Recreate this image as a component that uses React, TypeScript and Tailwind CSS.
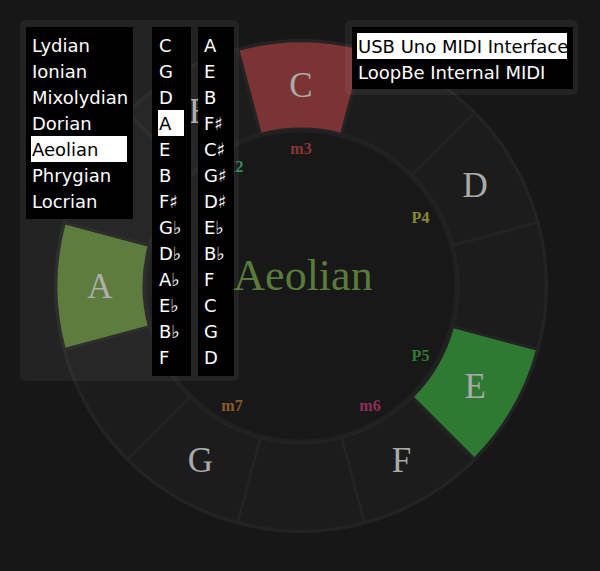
import React from "react";

const CX = 250;
const CY = 250;

const notes = ["C", "", "D", "", "E", "F", "", "G", "", "A", "", "B"];

// highlighted segments of the current mode (root A, aeolian)
const segFill: Record<number, string> = {
  0: "#7b3333",
  4: "#2f7a33",
  9: "#547534",
};

const intervals: {i: number; label: string; color: string}[] = [
  {i: 9, label: "P1", color: "#5a7b3a"},
  {i: 11, label: "M2", color: "#2e8b57"},
  {i: 0, label: "m3", color: "#8b3434"},
  {i: 2, label: "P4", color: "#8c8734"},
  {i: 4, label: "P5", color: "#2f7a33"},
  {i: 5, label: "m6", color: "#8b2f57"},
  {i: 7, label: "m7", color: "#8b5a2b"},
];

const modes = ["Lydian", "Ionian", "Mixolydian", "Dorian", "Aeolian", "Phrygian", "Locrian"];
const majors = ["C", "G", "D", "A", "E", "B", "F♯", "G♭", "D♭", "A♭", "E♭", "B♭", "F"];
const minors = ["A", "E", "B", "F♯", "C♯", "G♯", "D♯", "E♭", "B♭", "F", "C", "G", "D"];
const devices = ["USB Uno MIDI Interface", "LoopBe Internal MIDI"];

function pt(r: number, deg: number) {
  const a = (deg * Math.PI) / 180;
  return [CX + r * Math.sin(a), CY - r * Math.cos(a)];
}

function sector(a0: number, a1: number, r0: number, r1: number) {
  const [x1, y1] = pt(r1, a0);
  const [x2, y2] = pt(r1, a1);
  const [x3, y3] = pt(r0, a1);
  const [x4, y4] = pt(r0, a0);
  return `M${x1} ${y1} A${r1} ${r1} 0 0 1 ${x2} ${y2} L${x3} ${y3} A${r0} ${r0} 0 0 0 ${x4} ${y4} Z`;
}

function ListBox({items, selected, className}: {items: string[]; selected?: number; className: string}) {
  return (
    <div className={`bg-black ${className}`}>
      {items.map((item, idx) => (
        <div
          key={idx}
          className={`h-[26px] whitespace-nowrap pl-px pt-[2px] leading-[24px] ${
            idx === selected ? "bg-white text-black" : "text-white"
          }`}
        >
          {item}
        </div>
      ))}
    </div>
  );
}

function Wheel() {
  return (
    <svg width={500} height={500} viewBox="0 0 500 500" className="ml-[2px] block">
      <circle cx={CX} cy={CY} r={247} fill="#232323" />
      {notes.map((_, i) => (
        <path
          key={i}
          d={sector(i * 30 - 15, i * 30 + 15, 157, 245)}
          fill={segFill[i] ?? "#1c1c1c"}
          stroke="#232323"
          strokeWidth={3}
        />
      ))}
      <circle cx={CX} cy={CY} r={155} fill="#181818" stroke="#202020" strokeWidth={3} />
      {notes.map((n, i) => {
        if (!n) return null;
        const [x, y] = pt(201, i * 30);
        return (
          <text
            key={i}
            x={x}
            y={y}
            textAnchor="middle"
            dominantBaseline="central"
            fill="#aaaaaa"
            fontSize={35}
            fontFamily="'Liberation Serif', serif"
          >
            {n}
          </text>
        );
      })}
      {intervals.map((it) => {
        const [x, y] = pt(138, it.i * 30);
        return (
          <text
            key={it.label}
            x={x}
            y={y}
            textAnchor="middle"
            dominantBaseline="central"
            fill={it.color}
            fontSize={16}
            fontWeight="bold"
            fontFamily="'Liberation Serif', serif"
          >
            {it.label}
          </text>
        );
      })}
      <text
        x={252}
        y={254}
        textAnchor="middle"
        fill="#5a7b3a"
        fontSize={44}
        fontFamily="'Liberation Serif', serif"
      >
        Aeolian
      </text>
    </svg>
  );
}

export default function App() {
  return (
    <div className="relative flex h-screen w-full items-center justify-center overflow-hidden bg-[#171717] font-['DejaVu_Sans',sans-serif] text-[18px]">
      <Wheel />

      {/* mode + key pickers */}
      <div className="absolute left-[20px] top-[20px] flex h-[361px] w-[219px] items-start rounded-[6px] bg-white/5 pl-[6px] pt-[7px]">
        <ListBox items={modes} selected={4} className="w-[107px] py-[5px] pl-[5px] pr-[6px]" />
        <ListBox items={majors} selected={3} className="ml-[19px] w-[39px] pb-[6px] pl-[6px] pr-[7px] pt-[5px]" />
        <ListBox items={minors} className="ml-[7px] w-[36px] pb-[6px] pl-[5px] pr-[4px] pt-[5px]" />
      </div>

      {/* midi output picker */}
      <div className="absolute left-[345px] top-[20px] h-[75px] w-[233px] rounded-[6px] bg-white/5 pl-[7px] pt-[7px]">
        <ListBox items={devices} selected={0} className="h-[62px] w-[221px] pl-[5px] pr-[6px] pt-[6px]" />
      </div>
    </div>
  );
}
